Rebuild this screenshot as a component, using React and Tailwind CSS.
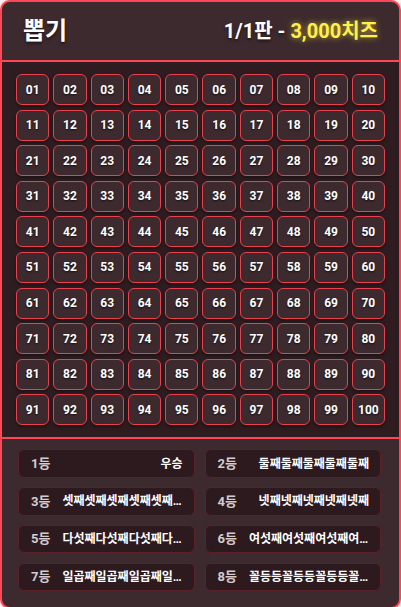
import React from 'react'

const prizes = [
  ['1등', '우승'],
  ['2등', '둘째둘째둘째둘째둘째'],
  ['3등', '셋째셋째셋째셋째셋째셋째'],
  ['4등', '넷째넷째넷째넷째넷째'],
  ['5등', '다섯째다섯째다섯째다섯째'],
  ['6등', '여섯째여섯째여섯째여섯째'],
  ['7등', '일곱째일곱째일곱째일곱째'],
  ['8등', '꼴등등꼴등등꼴등등꼴등등'],
]

const numbers = Array.from({ length: 100 }, (_, i) =>
  i + 1 < 10 ? `0${i + 1}` : `${i + 1}`
)

export default function App() {
  return (
    <div
      className="w-[401px] h-[607px] bg-white overflow-hidden"
      style={{ fontFamily: 'Roboto, "Noto Sans CJK KR", sans-serif' }}
    >
      <div className="h-[609px] flex flex-col rounded-[10px] border-2 border-[#ff4656] bg-[#3c2a2e] overflow-hidden shadow-[0_0_6px_rgba(255,70,86,0.45)]">
        {/* Header */}
        <div className="h-[60px] shrink-0 flex items-center justify-between px-[21px] border-b-2 border-[#ff4656]">
          <h1 className="text-[24px] font-bold text-white [text-shadow:0_2px_3px_rgba(0,0,0,0.55)]">
            뽑기
          </h1>
          <div className="text-[20px] font-bold text-white [text-shadow:0_2px_3px_rgba(0,0,0,0.5)]">
            1/1판 -{' '}
            <span className="text-[#fff04a] [text-shadow:0_0_6px_rgba(255,230,60,0.7)]">
              3,000치즈
            </span>
          </div>
        </div>

        {/* Number grid */}
        <div className="shrink-0 bg-[#2e1c20] px-[14px] pt-[12px] pb-[12px] border-b-2 border-[#ff4656]">
          <div className="grid grid-cols-10 gap-x-[4px] gap-y-[4.6px]">
            {numbers.map((n) => (
              <button
                key={n}
                className="h-[31px] rounded-[6px] border border-[#e8424f] bg-[#3d2a2e] text-[12px] font-bold text-white shadow-[0_2px_3px_rgba(0,0,0,0.35)] [text-shadow:0_1px_2px_rgba(0,0,0,0.7)]"
              >
                {n}
              </button>
            ))}
          </div>
        </div>

        {/* Prizes */}
        <div className="flex-1 pl-[16px] pr-[18px] pt-[10px]">
          <div className="grid grid-cols-2 gap-x-[10px] gap-y-[9.3px]">
            {prizes.map(([rank, name]) => (
              <div
                key={rank}
                className="h-[28.5px] flex items-center gap-[12px] pl-[12px] pr-[11px] rounded-[6px] border border-[#5c2029] bg-[#2c1a1f]"
              >
                <span className="shrink-0 text-[13px] font-bold text-[#d6cccd]">{rank}</span>
                <span className="flex-1 min-w-0 truncate text-right text-[12px] font-bold text-white">
                  {name}
                </span>
              </div>
            ))}
          </div>
        </div>
      </div>
    </div>
  )
}
